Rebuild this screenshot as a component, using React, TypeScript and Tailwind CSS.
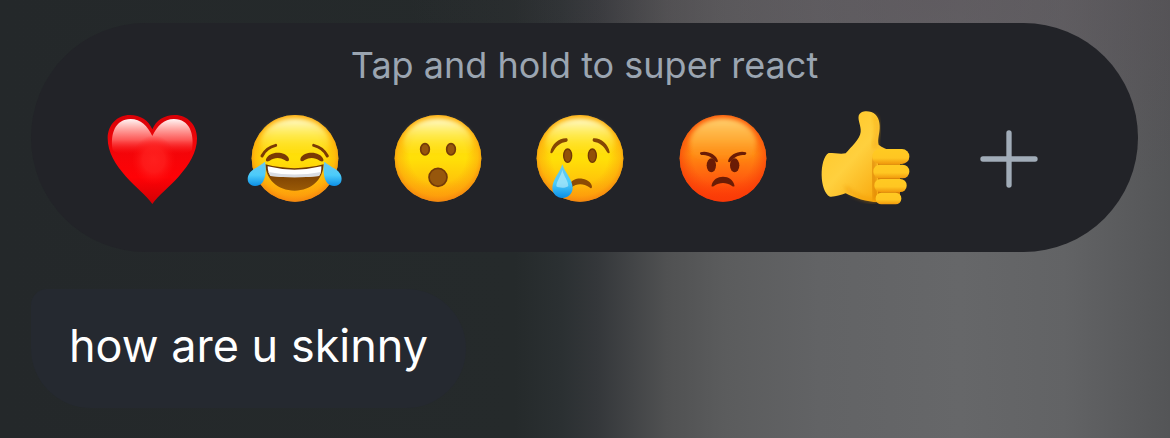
import type { ReactNode } from 'react'

const reactions: { label: string; art: ReactNode }[] = [
  { label: 'Heart', art: <HeartArt /> },
  { label: 'Tears of joy', art: <JoyArt /> },
  { label: 'Surprised', art: <SurprisedArt /> },
  { label: 'Crying', art: <CryingArt /> },
  { label: 'Angry', art: <AngryArt /> },
  { label: 'Thumbs up', art: <ThumbArt /> },
  { label: 'More reactions', art: <PlusArt /> },
]

function SharedDefs() {
  return (
    <svg className="absolute size-0" aria-hidden="true">
      <defs>
        <linearGradient id="face" x1="0" y1="0" x2="0" y2="1">
          <stop offset="0" stopColor="#ffc81c" />
          <stop offset="0.5" stopColor="#ffe008" />
          <stop offset="0.75" stopColor="#ffc60a" />
          <stop offset="1" stopColor="#ff9c0c" />
        </linearGradient>
        <radialGradient id="rim" cx="0.5" cy="0.47" r="0.54">
          <stop offset="0.6" stopColor="#fa940c" stopOpacity="0" />
          <stop offset="0.85" stopColor="#fc960c" stopOpacity="0.45" />
          <stop offset="1" stopColor="#f27e10" stopOpacity="0.9" />
        </radialGradient>
        <linearGradient id="shine" x1="0" y1="0" x2="0" y2="1">
          <stop offset="0" stopColor="#fffbd0" />
          <stop offset="0.35" stopColor="#fff566" stopOpacity="0.65" />
          <stop offset="0.8" stopColor="#ffe60a" stopOpacity="0" />
        </linearGradient>
        <linearGradient id="tear" x1="0" y1="0" x2="0" y2="1">
          <stop offset="0" stopColor="#6cc8ee" />
          <stop offset="0.55" stopColor="#4cccfa" />
          <stop offset="1" stopColor="#0c8fe6" />
        </linearGradient>
        <linearGradient id="brown" x1="0" y1="0" x2="0" y2="1">
          <stop offset="0" stopColor="#6b3300" />
          <stop offset="1" stopColor="#9a5a06" />
        </linearGradient>
        <filter id="soft" x="-20%" y="-20%" width="140%" height="140%">
          <feGaussianBlur stdDeviation="6" />
        </filter>
      </defs>
    </svg>
  )
}

function Face() {
  return (
    <>
      <circle cx="180" cy="175" r="130" fill="url(#face)" />
      <circle cx="180" cy="175" r="130" fill="url(#rim)" />
      <ellipse cx="180" cy="130" rx="104" ry="74" fill="url(#shine)" filter="url(#soft)" />
    </>
  )
}

function HeartArt() {
  return (
    <svg viewBox="7 0 360 345" className="w-full" aria-hidden="true">
      <defs>
        <linearGradient id="heart" x1="0" y1="0" x2="0" y2="1">
          <stop offset="0" stopColor="#d90006" />
          <stop offset="0.3" stopColor="#ef060a" />
          <stop offset="0.7" stopColor="#ff0206" />
          <stop offset="1" stopColor="#d20004" />
        </linearGradient>
        <linearGradient id="heartShine" x1="0" y1="0" x2="0" y2="1">
          <stop offset="0" stopColor="#fff5f5" />
          <stop offset="0.25" stopColor="#ffb0ac" />
          <stop offset="0.6" stopColor="#ff6260" stopOpacity="0.9" />
          <stop offset="1" stopColor="#ff1a1a" stopOpacity="0" />
        </linearGradient>
        <radialGradient id="heartGlow">
          <stop offset="0" stopColor="#ff2220" stopOpacity="0.9" />
          <stop offset="0.5" stopColor="#ff2220" stopOpacity="0.7" />
          <stop offset="1" stopColor="#ff1010" stopOpacity="0" />
        </radialGradient>
      </defs>
      <path
        d="M188 312C170 286 137 262 108 229C78 194 54 158 54 115C54 75 82 45 121 45C152 45 177 61 188 88C199 61 224 45 255 45C294 45 322 75 322 115C322 158 298 194 268 229C239 262 206 286 188 312Z"
        fill="url(#heart)"
      />
      <path
        d="M69 150C61 103 76 57 123 57C153 57 174 78 188 108C202 78 223 57 253 57C300 57 315 103 307 150C288 168 245 160 188 160C131 160 88 168 69 150Z"
        fill="url(#heartShine)"
      />
      <ellipse cx="192" cy="180" rx="66" ry="74" fill="url(#heartGlow)" />
    </svg>
  )
}

function JoyArt() {
  return (
    <svg viewBox="0 0 360 345" className="w-full" aria-hidden="true">
      <Face />
      <g fill="none" stroke="#7a3a05" strokeLinecap="round">
        <path d="M81 168Q93 143 122 136" strokeWidth="9" />
        <path d="M277 168Q265 143 236 136" strokeWidth="9" />
      </g>
      <path d="M93 178C102 152 150 152 161 174C165 185 156 186 149 180C134 171 118 172 104 182C97 186 91 185 93 178Z" fill="#7a3a05" />
      <path d="M265 178C256 152 208 152 197 174C193 185 202 186 209 180C224 171 240 172 254 182C261 186 267 185 265 178Z" fill="#7a3a05" />
      <path d="M91 193Q178 216 266 193C264 238 230 272 179 272C127 272 93 238 91 193Z" fill="url(#brown)" />
      <path d="M98 199Q178 219 259 199Q260 217 252 228Q178 236 107 228Q98 217 98 199Z" fill="#fff" />
      <path d="M100 216Q178 231 258 216Q256 223 252 228Q178 236 107 228Q102 222 100 216Z" fill="#d9dce2" />
      <path d="M90 185C94 205 93 230 84 245C73 262 48 262 40 247C34 231 43 216 57 207C70 199 82 192 90 185Z" fill="url(#tear)" />
      <path d="M268 185C264 205 265 230 274 245C285 262 310 262 318 247C324 231 315 216 301 207C288 199 276 192 268 185Z" fill="url(#tear)" />
    </svg>
  )
}

function SurprisedArt() {
  return (
    <svg viewBox="0 0 360 345" className="w-full" aria-hidden="true">
      <Face />
      <g fill="#97570c" stroke="#743b08" strokeWidth="5">
        <ellipse cx="141" cy="148" rx="13" ry="17" />
        <ellipse cx="219" cy="148" rx="13" ry="17" />
        <ellipse cx="180" cy="232" rx="27" ry="27" />
      </g>
    </svg>
  )
}

function CryingArt() {
  return (
    <svg viewBox="0 0 360 345" className="w-full" aria-hidden="true">
      <Face />
      <g fill="#925108" stroke="#713805" strokeWidth="4">
        <ellipse cx="143" cy="167" rx="12" ry="20" />
        <ellipse cx="217" cy="167" rx="12" ry="20" />
      </g>
      <path d="M91 157C95 131 119 113 141 115C144 118 144 124 140 125C122 127 108 138 99 156C96 161 91 161 91 157Z" fill="#854704" />
      <path d="M269 157C265 131 241 113 220 115C217 118 217 124 221 125C238 127 252 138 261 156C264 161 269 161 269 157Z" fill="#854704" />
      <path d="M149 253C155 239 171 234 187 236C206 239 216 251 216 261C215 266 211 266 208 262C190 249 168 251 155 262Z" fill="#8c4b04" />
      <path d="M127 193C134 218 158 237 158 265C157 283 143 294 127 294C111 294 98 282 97 265C97 239 120 218 127 193Z" fill="url(#tear)" />
      <path d="M127 210C122 230 109 245 109 259C117 265 139 265 145 258C145 243 132 230 127 210Z" fill="#c4eff9" opacity="0.6" />
    </svg>
  )
}

function AngryArt() {
  return (
    <svg viewBox="0 0 360 345" className="w-full" aria-hidden="true">
      <defs>
        <linearGradient id="anger" x1="0" y1="0" x2="0" y2="1">
          <stop offset="0" stopColor="#ff7c14" />
          <stop offset="0.45" stopColor="#ff8a12" />
          <stop offset="0.75" stopColor="#ff5c0e" />
          <stop offset="1" stopColor="#ff2c04" />
        </linearGradient>
        <radialGradient id="angerRim" cx="0.5" cy="0.46" r="0.54">
          <stop offset="0.65" stopColor="#f94a08" stopOpacity="0" />
          <stop offset="1" stopColor="#f83c08" stopOpacity="0.85" />
        </radialGradient>
        <linearGradient id="angerShine" x1="0" y1="0" x2="0" y2="1">
          <stop offset="0" stopColor="#ffd070" />
          <stop offset="0.45" stopColor="#ffb53c" stopOpacity="0.75" />
          <stop offset="0.9" stopColor="#ff9020" stopOpacity="0" />
        </linearGradient>
      </defs>
      <circle cx="180" cy="175" r="130" fill="url(#anger)" />
      <circle cx="180" cy="175" r="130" fill="url(#angerRim)" />
      <ellipse cx="180" cy="130" rx="100" ry="74" fill="url(#angerShine)" filter="url(#soft)" />
      <g fill="#6b1c05">
        <ellipse cx="145" cy="196" rx="14" ry="21" />
        <ellipse cx="215" cy="196" rx="14" ry="21" />
        <path d="M146 255C150 238 164 230 180 230C197 230 211 240 214 255C216 261 211 261 206 257C190 246 170 246 154 257C149 261 144 261 146 255Z" />
        <path d="M113 157C130 151 161 162 165 184C163 188 159 187 155 183C145 170 133 165 115 165C110 163 110 159 113 157Z" />
        <path d="M248 157C231 151 199 162 195 184C197 188 201 187 205 183C215 170 228 165 246 165C251 163 251 159 248 157Z" />
      </g>
    </svg>
  )
}

function ThumbArt() {
  return (
    <svg viewBox="2 0 360 345" className="w-full" aria-hidden="true">
      <defs>
        <linearGradient id="hand" x1="0" y1="0" x2="0.8" y2="1">
          <stop offset="0" stopColor="#ffc420" />
          <stop offset="0.55" stopColor="#ffd03e" />
          <stop offset="1" stopColor="#f9a90e" />
        </linearGradient>
        <linearGradient id="finger" x1="0" y1="0" x2="0" y2="1">
          <stop offset="0" stopColor="#ffca22" />
          <stop offset="0.6" stopColor="#ffc622" />
          <stop offset="1" stopColor="#f0980c" />
        </linearGradient>
      </defs>
      <path
        d="M70 159C88 159 105 163 121 160C137 141 164 118 166 96C168 78 157 62 160 47C164 33 184 31 198 36C217 43 224 63 223 85C222 105 216 119 220 134C230 144 248 145 246 153L218 307C184 306 148 294 121 280C105 285 90 291 74 290C42 275 41 176 70 159Z"
        fill="url(#hand)"
      />
      <path d="M202 40C224 55 227 94 214 127L219 137L203 148C201 126 215 94 207 63Z" fill="#f5a50e" opacity="0.6" filter="url(#soft)" />
      <path d="M121 260C135 280 170 298 210 303" fill="none" stroke="#ef950a" strokeWidth="9" opacity="0.6" filter="url(#soft)" />
      <path d="M205 176C200 205 206 258 212 300" fill="none" stroke="#d87c00" strokeWidth="14" opacity="0.75" filter="url(#soft)" />
      <path d="M218 170H284V295H218Z" fill="#d88008" />
      <g fill="url(#finger)">
        <rect x="211" y="278" width="77" height="35" rx="17" />
        <rect x="207" y="237" width="97" height="39" rx="19" />
        <rect x="204" y="194" width="108" height="41" rx="20" />
        <rect x="201" y="147" width="111" height="45" rx="22" />
      </g>
    </svg>
  )
}

function PlusArt() {
  return (
    <svg viewBox="0 0 360 345" className="w-full" aria-hidden="true">
      <path
        d="M180 99V255M102 177H258"
        fill="none"
        stroke="#a1acb8"
        strokeWidth="16"
        strokeLinecap="round"
      />
    </svg>
  )
}

function ReactionBar() {
  return (
    <section
      className="rounded-full bg-[#222328] pt-[22px] pb-[37px]"
      aria-labelledby="reaction-hint"
    >
      <h2 id="reaction-hint" className="text-center text-[36px] leading-10 text-[#9ba5b1]">
        Tap and hold to super react
      </h2>
      <ul className="mt-[15px] grid grid-cols-7 pr-[58px] pl-[50px]">
        {reactions.map((reaction) => (
          <li key={reaction.label} className="flex justify-center">
            <button type="button" aria-label={reaction.label} className="w-[120px] cursor-pointer">
              {reaction.art}
            </button>
          </li>
        ))}
      </ul>
    </section>
  )
}

export default function App() {
  return (
    <main className="min-h-screen bg-[radial-gradient(ellipse_45%_45%_at_80%_0%,rgba(88,78,86,0.45),transparent),linear-gradient(90deg,#24282a_0%,#252a2b_44%,#2b3032_48%,#34373a_51%,#424446_54%,#505152_57%,#5b5c5d_62%,#626365_70%,#666769_82%,#626365_91%,#545557_100%)] pt-[23px] pr-8 pb-[30px] pl-[31px] font-['Inter',sans-serif]">
      <SharedDefs />
      <ReactionBar />
      <p className="mt-[37px] w-fit rounded-[60px] rounded-tl-2xl bg-[#252930] px-[38px] pt-[25px] pb-[30px] text-[45px] leading-[64px] text-white">
        how are u skinny
      </p>
    </main>
  )
}
